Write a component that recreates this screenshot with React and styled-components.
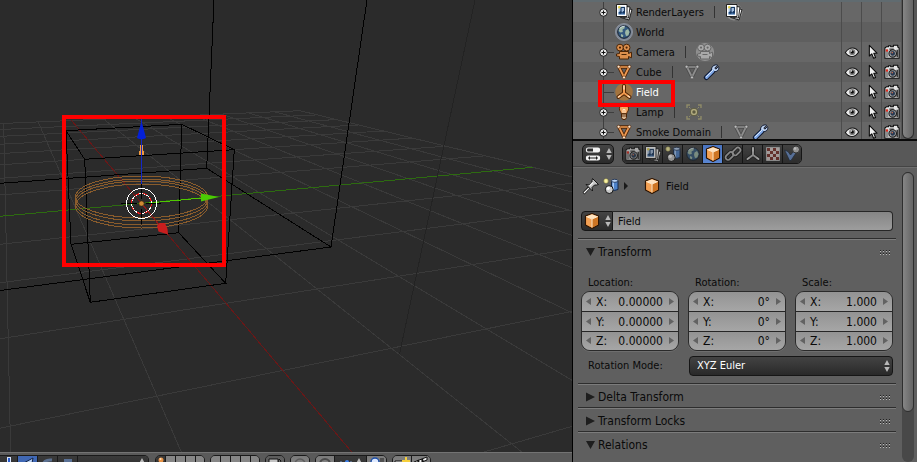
import React from 'react';
import styled, { createGlobalStyle, css } from 'styled-components';

const GlobalStyle = createGlobalStyle`
  *, *::before, *::after { box-sizing: border-box; }
  html, body, #root { height: 100%; }
  body { margin: 0; background: #2b2b2b; overflow: hidden; }
  button, input, select { font: inherit; color: inherit; margin: 0; padding: 0; border: 0; }
  svg { display: block; flex: none; }
`;

const Window = styled.div`
  display: grid;
  grid-template-columns: minmax(0, 1fr) 345px;
  height: 100vh;
  font: 11px/14px "DejaVu Sans Condensed", "DejaVu Sans", sans-serif;
  color: #0a0a0a;
`;

/* ---------- icons ---------- */

const Svg = ({ size = 18, children }) => (
  <svg width={size} height={size} viewBox="0 0 18 18" aria-hidden="true">{children}</svg>
);

const LayersArt = () => (
  <g strokeLinejoin="round">
    <path d="M8 4.500 17 6.500 14 17 6 14.500z" fill="#f4f4f4" stroke="#111" strokeWidth=".9" />
    <path d="M5 2.500 15 4 13.500 15 5 14z" fill="#fafafa" stroke="#111" strokeWidth=".9" />
    <path d="M1.500 1.500h10.500v12H1.500z" fill="#fff" stroke="#111" strokeWidth=".9" />
    <path d="M3.500 3.500h6.500v8H3.500z" fill="#a9c4e4" />
    <path d="M3.500 9h6.500v2.500H3.500z" fill="#3f6ea6" />
    <circle cx="4.300" cy="4.300" r="1.300" fill="#e6d24a" />
    <path d="M6 4.500h3.500v4.500M6 4.500v5" fill="none" stroke="#17365f" strokeWidth="1.100" />
    <circle cx="5.500" cy="9.500" r="1.200" fill="#17365f" /><circle cx="8.800" cy="9.200" r="1.200" fill="#17365f" />
  </g>
);
const LayersIcon = () => <Svg><LayersArt /></Svg>;
const LayersHaloIcon = () => (
  <Svg><circle cx="9" cy="9" r="8.500" fill="#8c8c8c" /><LayersArt /></Svg>
);

const WorldIcon = ({ halo }) => (
  <Svg>
    {halo && <circle cx="9" cy="9" r="8.600" fill="#7f8897" stroke="#9aa1ad" strokeWidth=".6" />}
    <circle cx="9" cy="9" r="6.300" fill="#34597f" stroke="#15202b" />
    <path d="M5 4.500 8.500 3 10 5 7.500 6.500 7.800 9 5.500 9.500 3.500 8zM10.500 7.500 13 6l1.600 3-1.300 3.500-2.300.5-1-3zM6 11l2.300 1-.4 2.200L6 13.500z" fill="#9db8a6" />
    <path d="M4.500 5.500Q7 2.800 10 3.200" fill="none" stroke="#dfeaf2" strokeWidth=".8" />
  </Svg>
);

const MovieArt = ({ fill, line }) => (
  <g fill={fill} stroke={line} strokeWidth="1">
    <circle cx="5" cy="4.600" r="3.400" />
    <circle cx="11.600" cy="4.600" r="3.400" />
    <path d="M4.500 8.500h9v2l3-1.300v5.600l-3-1.300v2.500h-9v-2.500l-3-.5v-2l3-.5z" strokeLinejoin="round" />
    <g fill={line} stroke="none">
      <circle cx="5" cy="4.600" r="1.100" /><circle cx="11.600" cy="4.600" r="1.100" />
      <path d="M6.500 11h5v1h-5z" />
    </g>
  </g>
);
const CameraIcon = () => <Svg><MovieArt fill="#dd8f4c" line="#4a2507" /></Svg>;
const CameraDataIcon = () => (
  <Svg>
    <circle cx="9" cy="9" r="8.600" fill="#8d8d8d" stroke="#a0a0a0" strokeWidth=".6" />
    <MovieArt fill="#a9a9a9" line="#676767" />
  </Svg>
);

const MeshShape = ({ stroke, edge, dot }) => (
  <Svg>
    <path d="M4 4h10L9 14z" fill="none" stroke={edge} strokeWidth="3.600" strokeLinejoin="round" />
    <path d="M4 4h10L9 14z" fill="none" stroke={stroke} strokeWidth="1.700" strokeLinejoin="round" />
    <g fill={dot} stroke={edge} strokeWidth=".6">
      <circle cx="3.600" cy="3.700" r="1.500" /><circle cx="14.400" cy="3.700" r="1.500" /><circle cx="9" cy="14.400" r="1.500" />
    </g>
  </Svg>
);
const MeshIcon = () => <MeshShape stroke="#ef9a52" edge="#4f2405" dot="#ffe6cc" />;
const MeshDataIcon = () => <MeshShape stroke="#8e8e8e" edge="#4c4c4c" dot="#bdbdbd" />;

const WrenchIcon = () => (
  <Svg>
    <path d="M3.400 14.600 9.600 8.400" stroke="#101a33" strokeWidth="5" strokeLinecap="round" />
    <path d="M14.600 2.200 11.800 5l1 1.200 2.800-2.600c.9 2.800-1.400 5.600-4.600 4.800L8.700 7.100C7.900 3.900 11.300 1 14.600 2.200z" fill="#c4d8f5" stroke="#101a33" strokeLinejoin="round" />
    <path d="M3.600 14.400 9.800 8.200" stroke="#7fa8e8" strokeWidth="3" strokeLinecap="round" />
    <path d="M3.400 13.600 9.800 7.200" stroke="#dceafd" strokeWidth="1" strokeLinecap="round" />
  </Svg>
);

const AxesArt = ({ stroke, edge, tip }) => (
  <g strokeLinecap="round">
    <path d="M9 3v7L3.500 14M9 10l5.500 4" fill="none" stroke={edge} strokeWidth="4" />
    <path d="M9 3v7L3.500 14M9 10l5.500 4" fill="none" stroke={stroke} strokeWidth="2" />
    <path d="M9 3v3M3.500 14l1.500-1M14.500 14l-1.500-1" stroke={tip} strokeWidth="1.400" />
  </g>
);
const EmptyIcon = () => (
  <Svg>
    <circle cx="9" cy="9" r="8.800" fill="#a3743f" />
    <AxesArt stroke="#f19a4e" edge="#4f2405" tip="#ffe0bd" />
  </Svg>
);

const LampIcon = () => (
  <Svg>
    <path d="M9 1.200a4.600 4.600 0 0 1 4.600 4.600c0 2-1.600 3-1.900 5H6.300c-.3-2-1.900-3-1.900-5A4.600 4.600 0 0 1 9 1.200z" fill="#f0a35f" stroke="#4f2405" />
    <path d="M6.500 11h5v3.500L10.300 16.500H7.700L6.500 14.500z" fill="#d9b48f" stroke="#4f2405" />
    <path d="M6.800 13h4.400" stroke="#4f2405" strokeWidth=".8" />
    <path d="M7 4.200q1-1.500 2.500-1.200M8 10V6.500h2V10" fill="none" stroke="#ffe4c6" />
  </Svg>
);
const LampDataIcon = () => (
  <Svg>
    <circle cx="9" cy="9" r="3.800" fill="#b0aa7e" stroke="#5b5940" />
    <circle cx="9" cy="9" r="1.700" fill="#5b5940" />
    <path d="M2 5V2h3M13 2h3v3M16 13v3h-3M5 16H2v-3" fill="none" stroke="#8f8b68" strokeWidth="1.400" />
    <path d="M4 4l1.500 1.500M14 4l-1.500 1.500M4 14l1.500-1.500M14 14l-1.500-1.500" stroke="#8f8b68" />
  </Svg>
);

const EyeIcon = () => (
  <Svg size={16}>
    <path d="M1.500 9.500Q5 4.500 9.500 4.500T16.500 9q-3 5-7.500 5T1.500 9.500z" fill="#e9e9e9" stroke="#141414" strokeWidth="1.200" />
    <circle cx="9.300" cy="9" r="3.500" fill="#7e7e7e" />
    <circle cx="9.300" cy="9" r="1.800" fill="#0c0c0c" />
    <circle cx="8.200" cy="7.800" r=".9" fill="#fff" />
  </Svg>
);
const PointerIcon = () => (
  <Svg size={16}>
    <path d="M6 1.500v12l2.800-2.400 2 5 2.200-1-2-4.700h3.600z" fill="#f2f2f2" stroke="#0b0b0b" strokeWidth="1.200" strokeLinejoin="round" />
  </Svg>
);
const RenderIcon = () => (
  <Svg size={16}>
    <path d="M1 4.500 3 3h2V2h2.500v1h3V1.500h5V3.500L17 4.500v11.500H1z" fill="#e4e4e4" stroke="#0d0d0d" strokeWidth="1.200" strokeLinejoin="round" />
    <path d="M2 6.500h3v8.500H2z" fill="#8d8d8d" />
    <path d="M2 6h2.500v2.500H2z" fill="#e02a1c" />
    <path d="M6 5h5v1.500H6zM14 6.500h2V15h-2z" fill="#3a3a3a" />
    <circle cx="9.800" cy="10.600" r="4.200" fill="#a5a5a5" stroke="#151515" strokeWidth="1.200" />
    <circle cx="9.800" cy="10.600" r="2.600" fill="#263850" />
    <circle cx="9.300" cy="9.600" r="1" fill="#b86a50" />
  </Svg>
);

const CubeIcon = () => (
  <Svg>
    <path d="M9 1.500 15.500 4v9L9 16.500 2.500 13V4z" fill="#e58a35" stroke="#2c1403" strokeWidth="1.200" strokeLinejoin="round" />
    <path d="M9 2.200 14.800 4.400 9 6.800 3.200 4.400z" fill="#ffe3c0" />
    <path d="M3.200 4.800 8.700 7.200v8.400L3.200 12.600z" fill="#f3a155" />
    <path d="M9.300 7.200 14.800 4.800v7.800L9.300 15.600z" fill="#cd7524" />
    <path d="M3.200 4.500 9 7l5.800-2.500M9 7v8.500" fill="none" stroke="#fff0d8" strokeWidth=".9" />
  </Svg>
);

const SceneIcon = () => (
  <Svg>
    <path d="M9.500 4v8.500q3 1.800 6.500 0V4z" fill="#4d82c9" stroke="#14284a" />
    <path d="M10.500 4.500v8h1.500v-8z" fill="#a9c9f3" />
    <ellipse cx="12.700" cy="3.800" rx="3.200" ry="1.500" fill="#b9d3f5" stroke="#14284a" strokeWidth=".8" />
    <circle cx="7.300" cy="12.600" r="3.900" fill="#c9c9c9" stroke="#111" />
    <circle cx="6.200" cy="11.300" r="1.700" fill="#fff" />
    <path d="M4 1v6M1 4h6M2 2l4 4M6 2 2 6" stroke="#b3aa45" strokeWidth=".7" />
    <circle cx="4" cy="4" r="1.900" fill="#fbf3a0" />
  </Svg>
);

const PinIcon = () => (
  <Svg>
    <path d="M1.500 16.500 7 10.500" stroke="#1b1b1b" strokeWidth="2.600" />
    <path d="M10.500 1.500 16.500 7.500 14.500 8 12.500 8 10 10.500 10.500 14 4 7.500 7.500 8 10 5.500 10 3.500z" fill="#c6c6c6" stroke="#151515" strokeLinejoin="round" />
    <path d="M2 16 6.800 11.200M7.500 8.800 11 5.300" stroke="#fff" strokeWidth="1.200" />
  </Svg>
);

const ChainIcon = () => (
  <Svg>
    <g fill="none" strokeLinecap="round">
      <g stroke="#151515" strokeWidth="3.600">
        <rect x="1" y="8.500" width="9" height="5" rx="2.500" transform="rotate(-45 5.500 11)" />
        <rect x="8" y="4" width="9" height="5" rx="2.500" transform="rotate(-45 12.500 6.500)" />
      </g>
      <g stroke="#b4b4b4" strokeWidth="1.700">
        <rect x="1" y="8.500" width="9" height="5" rx="2.500" transform="rotate(-45 5.500 11)" />
        <rect x="8" y="4" width="9" height="5" rx="2.500" transform="rotate(-45 12.500 6.500)" />
      </g>
    </g>
  </Svg>
);

const AxesGrayIcon = () => <Svg><AxesArt stroke="#b8b8b8" edge="#1c1c1c" tip="#e0e0e0" /></Svg>;

const CheckerIcon = () => (
  <Svg>
    <path d="M2.500 2.500h13v13h-13z" fill="#ddd0cc" stroke="#b9b9b9" />
    <path d="M3 3h3v3H3zM9 3h3v3H9zM6 6h3v3H6zM12 6h3v3h-3zM3 9h3v3H3zM9 9h3v3H9zM6 12h3v3H6zM12 12h3v3h-3z" fill="#7c2d25" />
  </Svg>
);

const PhysicsIcon = () => (
  <Svg>
    <path d="M1.500 5 5 6.500 7.500 10 11 6l2 2-5 7.500H6.500z" fill="#6a90cc" stroke="#1a2738" strokeWidth=".8" />
    <circle cx="13" cy="4.500" r="3.500" fill="#c4c4c4" stroke="#333" />
    <circle cx="12" cy="3.500" r="1.200" fill="#fff" />
  </Svg>
);

const EditorIcon = () => (
  <Svg>
    <rect x="2.500" y="3" width="13" height="4" rx="1.500" fill="#2b2b2b" stroke="#f2f2f2" strokeWidth="1.200" />
    <path d="M9 3h6v4H9z" fill="#f2f2f2" />
    <rect x="2.500" y="11" width="13" height="4" rx="1.500" fill="#f2f2f2" stroke="#f2f2f2" strokeWidth="1.200" />
    <path d="M6 11 4 13 6 15zM12 11l2 2-2 2zM6 12.500h6v1H6z" fill="#1c1c1c" />
  </Svg>
);

const UpDown = () => (
  <svg width="8" height="16" viewBox="0 0 8 16" aria-hidden="true">
    <path d="M4 2 6.700 7H1.300zM4 14 1.300 9h5.400z" fill="#b9b9b9" />
  </svg>
);

const Tri = ({ dir }) => (
  <svg width="8" height="10" viewBox="0 0 8 10" aria-hidden="true">
    <path d={{ left: 'M6 1v7L1 4.500z', right: 'M2 1v7L7 4.500z' }[dir]} fill="#626262" />
  </svg>
);

const GripDots = () => (
  <svg width="11" height="5" viewBox="0 0 11 5" shapeRendering="crispEdges" aria-hidden="true">
    <path d="M0 .5h11M0 3.500h11" stroke="#222" strokeDasharray="1 2" />
    <path d="M0 1.500h11M0 4.500h11" stroke="#b8b8b8" strokeDasharray="1 2" />
  </svg>
);

/* ---------- 3D viewport ---------- */

// Projects floor coordinates (-1..1 on each axis) on to the view plane.
const depth = (s, t) => 0.2887 * s + 1.006 * t + 1;
const project = (s, t) => {
  const w = depth(s, t);
  return [
    ((545 * s + 1.93 * t + 141.5) / w).toFixed(1),
    ((12.3 * s + 38.4 * t + 203.3) / w).toFixed(1),
  ];
};
const NEAR = 0.08;
const floorLine = (a, b) => {
  const wa = depth(...a);
  const wb = depth(...b);
  if (wa < NEAR && wb < NEAR) return '';
  const at = (k) => [a[0] + (b[0] - a[0]) * k, a[1] + (b[1] - a[1]) * k];
  const k = (NEAR - wa) / (wb - wa);
  const p = wa < NEAR ? at(k) : a;
  const q = wb < NEAR ? at(k) : b;
  return `M${project(...p).join(' ')}L${project(...q).join(' ')}`;
};
const steps = Array.from({ length: 17 }, (_, i) => (i - 8) / 8);
const gridPath = steps
  .filter((n) => n !== 0)
  .map((n) => floorLine([n, 1], [n, -1]) + floorLine([-1, n], [1, n]))
  .join('');
const rings = [[197, 21], [200, 21], [203, 22], [206, 22]];

const Viewport = styled.main`
  display: flex;
  flex-direction: column;
  min-width: 0;
  min-height: 0;
  background: #2b2b2b;
`;

const Scene = styled.svg`
  flex: 1 1 0;
  width: 100%;
  min-height: 0;
`;

const ViewportScene = () => (
  <Scene viewBox="0 0 572 452" preserveAspectRatio="xMinYMin slice" role="img" aria-label="3D view">
    <g fill="none" shapeRendering="crispEdges">
      <path d={gridPath} stroke="#3a3a3a" />
      <path d={floorLine([0, 1], [0, -1])} stroke="#6a1717" />
      <path d={floorLine([-1, 0], [1, 0])} stroke="#2d6b10" />
      <path d="M475 0 399.500 354" stroke="#232323" />
      <g stroke="#000">
        <path d="M214 0 206.700 168.300 0 183.300M206.700 168.300 331 247 367 0M331 247 0 290.500" />
        <path d="M66 130.700 181.700 124.300 234.300 149.700 84.700 159.300zM71 244.300 178.700 232.700 225.700 283.300 90.300 302.300z" />
        <path d="M66 130.700 71 244.300M181.700 124.300 178.700 232.700M234.300 149.700 225.700 283.300M84.700 159.300 90.300 302.300" />
      </g>
      <g stroke="#8a5c2c">
        {rings.map(([cy, ry]) => <ellipse key={cy} cx="141.500" cy={cy} rx="66" ry={ry} />)}
      </g>
      <path d="M139.500 155v-4.500M140.500 155v-10M142.500 155v-10M143.500 155v-4.500" stroke="#f0983c" />
      <path d="M141.500 118v66" stroke="#1428c8" />
      <path d="M149 203 202 198" stroke="#4fc800" />
      <path d="M141.500 184v9M141.500 214v10M121 203.500h10M151 203.500h10" stroke="#000" />
      <path d="M142 204 160 226" stroke="#8c1b1b" />
    </g>
    <path d="M141.500 121 146 138q-4.500 2.500-9 0z" fill="#0420d8" />
    <path d="M201 193.500 219 197 201 201.500z" fill="#4bcb04" />
    <path d="M157 226 159.500 223h5.500L167.500 229 168 234.500 158.500 231.500z" fill="#c81e1e" />
    <g fill="none" shapeRendering="crispEdges">
      <circle cx="141.500" cy="203.500" r="10" stroke="#fff" />
      <circle cx="141.500" cy="203.500" r="10" stroke="#f01818" strokeDasharray="4 4" />
      <circle cx="141.500" cy="203.500" r="15" stroke="#fff" />
      <path d="M141.500 193v6M141.500 209v6M131 203.500h6M146 203.500h6" stroke="#000" />
    </g>
    <circle cx="141.500" cy="203.500" r="2.600" fill="#d08a35" stroke="#3b2509" strokeWidth=".6" />
    <rect x="64" y="117" width="160" height="148" fill="none" stroke="#ff0000" strokeWidth="4" />
  </Scene>
);

const ViewHeader = styled.div`
  display: flex;
  align-items: flex-start;
  gap: 5px;
  height: 10px;
  padding-top: 2px;
  overflow: hidden;
  background: #5a5a5a;
  border-top: 1px solid #737373;
`;

const ToolGroup = styled.div`
  display: flex;
  flex: none;
  height: 20px;
  border: 1px solid #1a1a1a;
  border-radius: 5px;
  overflow: hidden;
  &:first-child { border-left: 0; border-radius: 0 5px 5px 0; margin-right: 1px; }
`;

const toolTones = {
  dark: 'linear-gradient(#3a3a3a, #2a2a2a)',
  blue: '#4068b4',
  gray: 'linear-gradient(#7a7a7a, #8e8e8e)',
  mid: 'linear-gradient(#5c5c5c, #6e6e6e)',
  layer: '#868686',
};
const ToolButton = styled.button`
  width: ${(p) => p.$w}px;
  height: 18px;
  display: flex;
  justify-content: ${(p) => (p.$end ? 'flex-end' : 'center')};
  background: ${(p) => toolTones[p.$tone]};
  && { padding-right: ${(p) => (p.$end ? 2 : 0)}px; }
  & + & { border-left: 1px solid #1a1a1a; }
`;

const MiniArt = ({ children }) => <svg width="16" height="16" viewBox="0 0 16 16" aria-hidden="true">{children}</svg>;

const layerWidths = [9, 10, 10, 10, 9];
const LayerButtons = ({ first }) => (
  <ToolGroup>
    {layerWidths.map((w, n) => (
      <ToolButton key={n} $w={w} $tone={first && n === 0 ? 'dark' : 'layer'} aria-label={`Layer ${n + 1}`}>
        {first && n === 0 && (
          <svg width="8" height="8" viewBox="0 0 8 8" aria-hidden="true"><circle cx="4" cy="4" r="2.500" fill="#e89345" /><circle cx="3.500" cy="3" r="1" fill="#ffe0b8" /></svg>
        )}
      </ToolButton>
    ))}
  </ToolGroup>
);

const ViewportHeader = () => (
  <ViewHeader>
    <ToolGroup>
      <ToolButton $w={17} $tone="dark" aria-label="Manipulator"><MiniArt><path d="M6 1h4v12H6z" fill="#d8e6ff" /><path d="M8 2v11" stroke="#2a5ed0" strokeWidth="2" /></MiniArt></ToolButton>
      <ToolButton $w={20} $tone="blue" aria-label="Translate"><MiniArt><path d="M2 8 13 2l-1 5-8 6z" fill="#b6cff5" stroke="#132548" /></MiniArt></ToolButton>
      <ToolButton $w={20} $tone="dark" aria-label="Rotate"><MiniArt><path d="M3 11q0-8 9-7" fill="none" stroke="#5c7191" strokeWidth="3" /></MiniArt></ToolButton>
      <ToolButton $w={20} $tone="dark" aria-label="Scale"><MiniArt><path d="M4 3h8v8H4z" fill="#5a7196" /></MiniArt></ToolButton>
      <ToolButton $w={71} $tone="dark" $end aria-label="Orientation"><UpDown /></ToolButton>
    </ToolGroup>
    <LayerButtons first />
    <LayerButtons />
    <ToolGroup>
      <ToolButton $w={18} $tone="mid" aria-label="Lock"><MiniArt><path d="M2 3h9v6H2zM12 3l2 2-2 3z" fill="#c2c2c2" stroke="#111" /></MiniArt></ToolButton>
    </ToolGroup>
    <ToolGroup>
      <ToolButton $w={18} $tone="gray" aria-label="Proportional editing"><MiniArt><circle cx="8" cy="8" r="5" fill="none" stroke="#5c5c5c" strokeWidth="1.500" /></MiniArt></ToolButton>
    </ToolGroup>
    <ToolGroup>
      <ToolButton $w={18} $tone="gray" aria-label="Snap"><MiniArt><circle cx="8" cy="8" r="5" fill="none" stroke="#4a4a4a" strokeWidth="2" /></MiniArt></ToolButton>
      <ToolButton $w={32} $tone="dark" aria-label="Snap element"><MiniArt><path d="M1 6h14" stroke="#7d9ccc" strokeDasharray="2 3" /><circle cx="8" cy="6" r="2" fill="#3d7fe8" /></MiniArt><UpDown /></ToolButton>
      <ToolButton $w={20} $tone="gray" aria-label="Snap target"><MiniArt><circle cx="6" cy="6" r="4" fill="#dfeaff" stroke="#1d4fa8" strokeWidth="1.500" /><path d="M12 2v8M14 2v8" stroke="#222" /></MiniArt></ToolButton>
    </ToolGroup>
    <ToolGroup>
      <ToolButton $w={18} $tone="gray" aria-label="Render"><MiniArt><path d="M1 5h10v3H1z" fill="#eee" stroke="#111" /><path d="M12 1v8M8 5h8" stroke="#f5cf3c" strokeWidth="2" /></MiniArt></ToolButton>
      <ToolButton $w={19} $tone="gray" aria-label="Render animation"><MiniArt><path d="M1 6 14 1v3L1 9z" fill="#eee" stroke="#111" /><path d="M5 4l1 4M9 3l1 3" stroke="#111" strokeWidth="2" /></MiniArt></ToolButton>
    </ToolGroup>
  </ViewHeader>
);

/* ---------- outliner ---------- */

const Sidebar = styled.aside`
  display: flex;
  flex-direction: column;
  min-height: 0;
  border-left: 1px solid #000;
  background: #5f5f5f;
`;

const Outliner = styled.section`
  display: grid;
  grid-template-columns: minmax(0, 1fr) 12px;
  column-gap: 1px;
  padding-right: 3px;
  height: 141px;
  flex: none;
  overflow: hidden;
  background: #565656;
  border-bottom: 2px solid #0a0a0a;
`;

const Tree = styled.ul`
  list-style: none;
  margin: 0;
  padding: 0;
  border-top: 2px solid #606b70;
`;

const TreeRow = styled.li`
  position: relative;
  display: flex;
  align-items: center;
  height: 20px;
  padding-left: 24px;
  background: #5f5f5f;
  color: ${(p) => (p.$active ? '#fff' : '#0a0a0a')};
  &:nth-child(odd) { background: #676767; }
`;

const TreeLabel = styled.span`
  padding: 2px 0 0 3px;
  white-space: nowrap;
`;

const Divider = styled.i`
  width: 1px;
  height: 12px;
  margin: 0 10px;
  background: #333;
`;

const DataIcons = styled.span`
  display: flex;
  gap: 2px;
`;

const Restrict = styled.span`
  display: flex;
  align-self: stretch;
  margin-left: auto;
`;

const RestrictCell = styled.span`
  display: flex;
  width: 20px;
  border-left: 1px solid #4c4c4c;
`;

const RestrictButton = styled.button`
  display: grid;
  place-items: center;
  width: 19px;
  height: 20px;
  background: none;
`;

const Highlight = styled.div`
  position: absolute;
  z-index: 1;
  inset: -2px auto -5px 25px;
  width: 77px;
  border: 4px solid #ff0000;
  pointer-events: none;
`;

const Branch = ({ expand, link }) => (
  <svg width="18" height="20" viewBox="0 0 18 20" aria-hidden="true">
    <path d="M6.500 0v20" stroke="#3e3e3e" shapeRendering="crispEdges" />
    {link && <path d="M7 10.500h10" stroke="#3e3e3e" shapeRendering="crispEdges" />}
    {expand && (
      <g>
        <circle cx="6.500" cy="10.500" r="3.800" fill="#e4e4e4" stroke="#1c1c1c" />
        <path d="M4.500 10.500h4M6.500 8.500v4" stroke="#111" />
      </g>
    )}
  </svg>
);

const treeItems = [
  { name: 'RenderLayers', icon: LayersIcon, data: [LayersHaloIcon], expand: true },
  { name: 'World', icon: () => <WorldIcon halo /> },
  { name: 'Camera', icon: CameraIcon, data: [CameraDataIcon], expand: true, link: true, object: true },
  { name: 'Cube', icon: MeshIcon, data: [MeshDataIcon, WrenchIcon], expand: true, link: true, object: true },
  { name: 'Field', icon: EmptyIcon, link: true, object: true, active: true },
  { name: 'Lamp', icon: LampIcon, data: [LampDataIcon], expand: true, link: true, object: true },
  { name: 'Smoke Domain', icon: MeshIcon, data: [MeshDataIcon, WrenchIcon], expand: true, link: true, object: true },
];

const restrictions = [['Visible', EyeIcon], ['Selectable', PointerIcon], ['Renderable', RenderIcon]];

const Trough = styled.div`
  display: flex;
  align-items: stretch;
  background: #484848;
  border-radius: 6px;
  ${(p) => p.$open === 'top' && css`border-top-left-radius: 0; border-top-right-radius: 0; margin-bottom: 3px;`}
`;

const Thumb = styled.div`
  width: 12px;
  height: ${(p) => p.$h};
  border: 1px solid #2e2e2e;
  border-radius: ${(p) => (p.$cut ? '0 0 6px 6px' : '6px')};
  border-top-width: ${(p) => (p.$cut ? 0 : 1)}px;
  background: linear-gradient(90deg, #858585, #646464);
`;

const OutlinerPanel = () => (
  <Outliner aria-label="Outliner">
    <Tree>
      {treeItems.map(({ name, icon: Icon, data, expand, link, object, active }) => (
        <TreeRow key={name} $active={active}>
          <Branch expand={expand} link={link} />
          <Icon />
          <TreeLabel>{name}</TreeLabel>
          {data && <><Divider /><DataIcons>{data.map((D, i) => <D key={i} />)}</DataIcons></>}
          <Restrict>
            {restrictions.map(([title, R]) => (
              <RestrictCell key={title}>
                {object && <RestrictButton aria-label={`${title}: ${name}`}><R /></RestrictButton>}
              </RestrictCell>
            ))}
          </Restrict>
          {active && <Highlight />}
        </TreeRow>
      ))}
    </Tree>
    <Trough $open="top"><Thumb $h="100%" $cut /></Trough>
  </Outliner>
);

/* ---------- properties editor ---------- */

const PropsHeader = styled.header`
  display: flex;
  align-items: center;
  gap: 8px;
  flex: none;
  height: 26px;
  padding: 0 9px;
  background: #585858;
  border-bottom: 1px solid #444;
  box-shadow: 0 1px #6e6e6e;
`;

const MenuButton = styled.button`
  display: flex;
  align-items: center;
  justify-content: center;
  gap: 3px;
  flex: none;
  width: 32px;
  height: 20px;
  color: #fff;
  background: linear-gradient(#444, #2b2b2b);
  && { border: 1px solid #161616; }
  border-radius: ${(p) => (p.$joined ? '4px 0 0 4px' : '5px')};
`;

const Tabs = styled.nav`
  display: grid;
  grid-template-columns: 19px repeat(7, 20px) 19px;
  height: 20px;
  border: 1px solid #161616;
  border-radius: 5px;
  overflow: hidden;
`;

const Tab = styled.button`
  display: grid;
  place-items: center;
  background: ${(p) => (p.$on ? 'linear-gradient(#4a74c0, #5a86d2)' : 'linear-gradient(#424242, #2e2e2e)')};
  & + & { border-left: 1px solid #161616; }
  svg { opacity: ${(p) => (p.$on ? 1 : 0.65)}; }
`;

const tabs = [
  ['Render', RenderIcon], ['Render Layers', LayersIcon], ['Scene', SceneIcon], ['World', WorldIcon],
  ['Object', CubeIcon], ['Constraints', ChainIcon], ['Object Data', AxesGrayIcon],
  ['Texture', CheckerIcon], ['Physics', PhysicsIcon],
];

const PropsBody = styled.div`
  display: grid;
  grid-template-columns: minmax(0, 1fr) 12px;
  column-gap: 6px;
  flex: 1;
  min-height: 0;
  padding: 5px 3px 0 5px;
  overflow: hidden;
`;

const PanelColumn = styled.div`
  min-width: 0;
`;

const Breadcrumb = styled.div`
  display: flex;
  align-items: center;
  height: 28px;
  padding-left: 4px;
  gap: 2px;
`;

const Crumb = styled.span`
  display: flex;
  align-items: center;
  gap: 5px;
  margin-left: 11px;
`;

const CrumbText = styled.span`
  padding-top: 2px;
`;

const IdRow = styled.div`
  display: flex;
  height: 20px;
  margin: 11px 3px 7px;
`;

const NameInput = styled.input`
  flex: 1;
  min-width: 0;
  && { padding: 2px 5px 0; border: 1px solid #262626; border-left: 0; }
  border-radius: 0 4px 4px 0;
  background: linear-gradient(#858585, #9d9d9d);
  outline: 0;
`;

const Panel = styled.section`
  border-top: 1px solid #2d2d2d;
  box-shadow: inset 0 1px #7c7c7c;
`;

const PanelHead = styled.button`
  display: flex;
  align-items: center;
  gap: 3px;
  width: 100%;
  height: 23px;
  && { padding: 3px 5px 0 8px; font-size: 12px; }
  background: none;
  text-align: left;
  svg:last-child { margin-left: auto; }
`;

const PanelHeading = ({ open, children }) => (
  <PanelHead aria-expanded={!!open}>
    <svg width="9" height="10" viewBox="0 0 9 10" aria-hidden="true">
      <path d={open ? 'M0 1h9L4.500 9z' : 'M0 .5v9L9 5z'} fill="#1e1e1e" />
    </svg>
    {children}
    <GripDots />
  </PanelHead>
);

const PanelBody = styled.div`
  padding: 14px 3px 7px;
`;

const Columns = styled.div`
  display: grid;
  grid-template-columns: repeat(3, minmax(0, 1fr));
  gap: 9px;
`;

const VectorGroup = styled.fieldset`
  min-width: 0;
  margin: 0;
  padding: 0;
  border: 0;
`;

const VectorLegend = styled.legend`
  height: 15px;
  padding: 0 0 0 7px;
`;

const VectorBox = styled.div`
  border: 1px solid #2a2a2a;
  border-radius: 9px;
  overflow: hidden;
  box-shadow: 0 1px #6e6e6e;
`;

const NumberRow = styled.label`
  display: flex;
  align-items: center;
  height: 19px;
  padding: 0 3px;
  font-size: 12px;
  background: linear-gradient(#939393, #a6a6a6);
  & + & { height: 20px; border-top: 1px solid #262626; }
  &:last-child { height: 19px; }
`;

const AxisName = styled.span`
  margin-left: 3px;
`;

const NumberInput = styled.input`
  flex: 1;
  min-width: 0;
  width: 0;
  && { padding-right: 4px; }
  background: none;
  text-align: right;
  outline: 0;
`;

const vectors = [['Location:', '0.00000'], ['Rotation:', '0°'], ['Scale:', '1.000']];

const ModeRow = styled.div`
  display: grid;
  grid-template-columns: 108px minmax(0, 1fr);
  align-items: center;
  margin-top: 5px;
`;

const ModeLabel = styled.label`
  padding-left: 7px;
`;

const SelectWrap = styled.div`
  position: relative;
  svg { position: absolute; right: 2px; top: 2px; pointer-events: none; }
`;

const ModeSelect = styled.select`
  appearance: none;
  display: block;
  width: 100%;
  height: 20px;
  && { padding: 0 7px; color: #fff; border: 1px solid #161616; }
  border-radius: 4px;
  background: linear-gradient(#434343, #292929);
  outline: 0;
`;

const PropertiesEditor = () => (
  <>
    <PropsHeader>
      <MenuButton aria-label="Editor type"><EditorIcon /><UpDown /></MenuButton>
      <Tabs>
        {tabs.map(([name, T]) => (
          <Tab key={name} $on={name === 'Object'} aria-label={name}><T /></Tab>
        ))}
      </Tabs>
    </PropsHeader>
    <PropsBody>
      <PanelColumn>
        <Breadcrumb>
          <PinIcon />
          <SceneIcon />
          <svg width="8" height="10" viewBox="0 0 8 10" aria-hidden="true"><path d="M2 1v8L6 5z" fill="#1a1a1a" /></svg>
          <Crumb><CubeIcon /><CrumbText>Field</CrumbText></Crumb>
        </Breadcrumb>
        <IdRow>
          <MenuButton $joined aria-label="Browse object"><CubeIcon /><UpDown /></MenuButton>
          <NameInput defaultValue="Field" aria-label="Name" />
        </IdRow>
        <Panel>
          <PanelHeading open>Transform</PanelHeading>
          <PanelBody>
            <Columns>
              {vectors.map(([title, value]) => (
                <VectorGroup key={title}>
                  <VectorLegend>{title}</VectorLegend>
                  <VectorBox>
                    {['X:', 'Y:', 'Z:'].map((axis) => (
                      <NumberRow key={axis}>
                        <Tri dir="left" />
                        <AxisName>{axis}</AxisName>
                        <NumberInput defaultValue={value} />
                        <Tri dir="right" />
                      </NumberRow>
                    ))}
                  </VectorBox>
                </VectorGroup>
              ))}
            </Columns>
            <ModeRow>
              <ModeLabel htmlFor="rotation-mode">Rotation Mode:</ModeLabel>
              <SelectWrap>
                <ModeSelect id="rotation-mode"><option>XYZ Euler</option></ModeSelect>
                <UpDown />
              </SelectWrap>
            </ModeRow>
          </PanelBody>
        </Panel>
        <Panel><PanelHeading>Delta Transform</PanelHeading></Panel>
        <Panel><PanelHeading>Transform Locks</PanelHeading></Panel>
        <Panel><PanelHeading open>Relations</PanelHeading></Panel>
      </PanelColumn>
      <Trough><Thumb $h="240px" /></Trough>
    </PropsBody>
  </>
);

export default function App() {
  return (
    <>
      <GlobalStyle />
      <Window>
        <Viewport>
          <ViewportScene />
          <ViewportHeader />
        </Viewport>
        <Sidebar>
          <OutlinerPanel />
          <PropertiesEditor />
        </Sidebar>
      </Window>
    </>
  );
}
